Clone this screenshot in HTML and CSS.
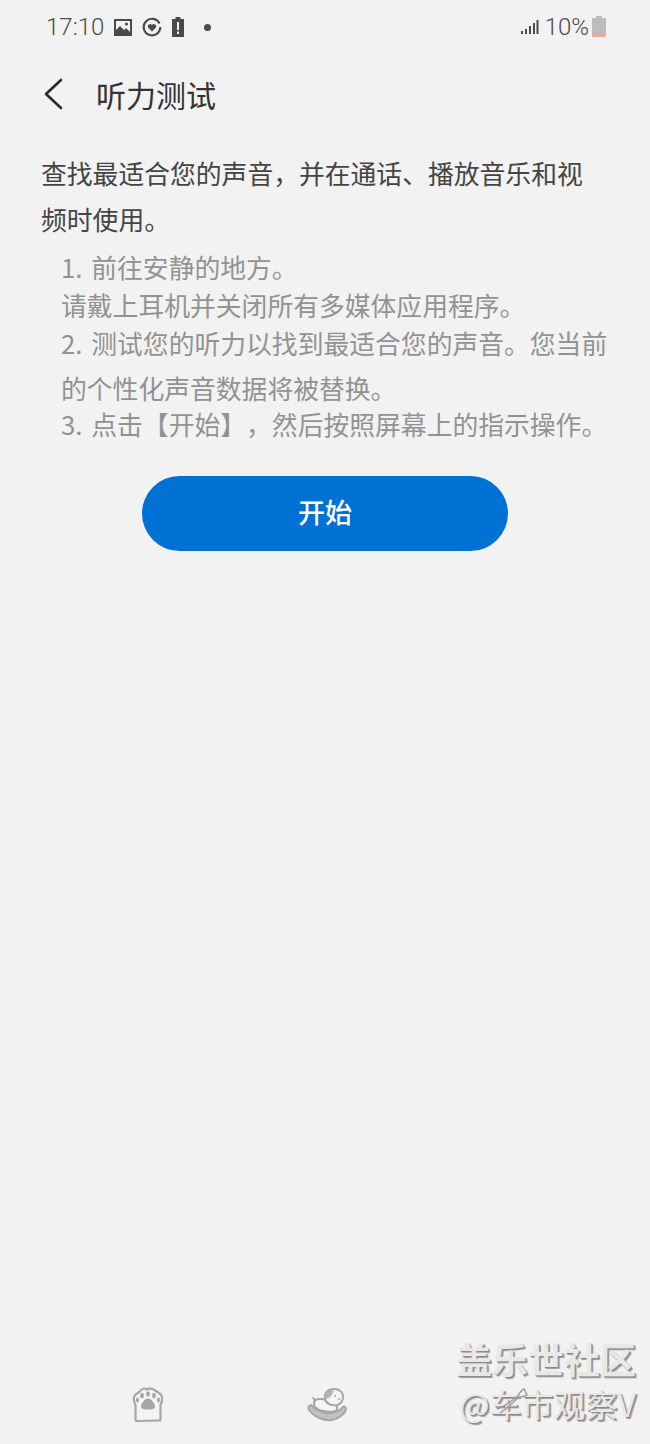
FILE: index.html
```html
<!DOCTYPE html>
<html lang="zh-CN">
<head>
  <meta charset="utf-8">
  <title>听力测试</title>
  <link rel="stylesheet" href="styles.css">
</head>
<body>
  <div class="screen">
    <!-- Status bar -->
    <div class="status">
      <div class="status-left">
        <span class="time">17:10</span>
        <svg class="ico" width="20" height="19" viewBox="0 0 20 19">
          <path fill="#4a4a4a" fill-rule="evenodd" d="M1 1h18v17H1z M3 3v9l4-4 4 4 2-2 4 4V3z"/>
          <circle cx="13.500" cy="6" r="1.600" fill="#4a4a4a"/>
        </svg>
        <svg class="ico" width="20" height="20" viewBox="0 0 20 20">
          <path fill="none" stroke="#4a4a4a" stroke-width="2.200" d="M17.500 6.500A8.300 8.300 0 1 0 18.300 10"/>
          <path fill="#4a4a4a" d="M10 14.500l-4-4a2.400 2.400 0 0 1 4-2.600 2.400 2.400 0 0 1 4 2.600z"/>
        </svg>
        <svg class="ico" width="14" height="20" viewBox="0 0 14 20">
          <path fill="#4a4a4a" fill-rule="evenodd" d="M4.500 0h5v2H13v18H1V2h3.500z M6 5v8h2V5z M6 14.500v2.500h2v-2.500z"/>
        </svg>
        <span class="dot"></span>
      </div>
      <div class="status-right">
        <svg class="ico" width="18" height="16" viewBox="0 0 18 16">
          <path fill="#4a4a4a" d="M0 12h2v3H0z M4 10h2v5H4z M8 7h2v8H8z M12 4h2v11h-2z M15.500 1h2v14h-2z"/>
        </svg>
        <span class="percent">10%</span>
        <svg class="ico" width="14" height="22" viewBox="0 0 14 22">
          <path fill="#bdbdbd" d="M4 0h6v2h4v15H0V2h4z"/>
          <path fill="#f0a898" d="M0 17h14v3a1 1 0 0 1-1 1H1a1 1 0 0 1-1-1z"/>
        </svg>
      </div>
    </div>

    <!-- Title row -->
    <div class="header">
      <svg class="back" width="20" height="32" viewBox="0 0 20 32">
        <path fill="none" stroke="#2b2b2b" stroke-width="2.600" stroke-linecap="round" stroke-linejoin="round" d="M18 2L3 16l15 14"/>
      </svg>
      <h1>听力测试</h1>
    </div>

    <div class="content">
      <p class="intro">查找最适合您的声音，并在通话、播放音乐和视频时使用。</p>
      <div class="steps">
        <p>1. 前往安静的地方。<br>请戴上耳机并关闭所有多媒体应用程序。</p>
        <p class="step-wide">2. 测试您的听力以找到最适合您的声音。您当前的个性化声音数据将被替换。</p>
        <p>3. 点击【开始】，然后按照屏幕上的指示操作。</p>
      </div>
      <button class="start">开始</button>
    </div>

    <!-- Bottom stickers -->
    <div class="bottom">
      <svg width="32" height="36" viewBox="0 0 32 36">
        <path fill="#f4f4f4" stroke="#a6a6a6" stroke-width="2.200" stroke-linejoin="round" d="M5 34c-1 0-1.500-.6-1.500-1.500V18C2 15 1 12 2.500 9 4 6 7 6 8 4c2-2.500 5-3 7-1.500 2-1.500 6-1 8 1 2 1.500 5 2.500 6.500 5 1.500 3 .5 6-1 9v14.500c0 1-.5 1.500-1.500 1.500z"/>
        <ellipse cx="10" cy="8.500" rx="1.900" ry="2.700" fill="#a6a6a6"/>
        <ellipse cx="16" cy="7" rx="1.900" ry="2.700" fill="#a6a6a6"/>
        <ellipse cx="22" cy="8.500" rx="1.900" ry="2.700" fill="#a6a6a6"/>
        <ellipse cx="5.500" cy="13" rx="1.500" ry="2.600" fill="#a6a6a6"/>
        <ellipse cx="26.500" cy="13" rx="1.500" ry="2.600" fill="#a6a6a6"/>
        <path fill="#a6a6a6" d="M16 11.500c3 0 7 5 7 8 0 2.500-3 3-7 3s-7-.5-7-3c0-3 4-8 7-8z"/>
      </svg>
      <svg width="40" height="34" viewBox="0 0 40 34">
        <path fill="#c2c2c2" stroke="#a6a6a6" stroke-width="2" stroke-linejoin="round" d="M4 17c-3 1-3 3-2 5 5 7 15 11 23 10 6-1 13-6 14-11 0-2-2-3-3-2-3 4-10 7-17 6-6-1-11-4-15-8z"/>
        <path fill="#f4f4f4" stroke="#a6a6a6" stroke-width="2" d="M8 13c-3 4 1 9 8 10 6 1 13 1 14-2 1-2-1-4-3-7l-12-3c-3 0-6-1-7 2z"/>
        <path fill="#a6a6a6" d="M5 9c1 2 1 4 3 6l1-3c-1-1-2-3-4-3z"/>
        <path fill="#f4f4f4" stroke="#a6a6a6" stroke-width="2" d="M18 11c-1-6 3-10 9-10 5 0 9 3 9 7 .5 4-2 8-6 9-5 1-11-1-12-6z"/>
        <path fill="#b4b4b4" d="M18 10c0-5 4-8 8-8 1 2-1 5-3 7-2 2-4 2-5 1z"/>
        <circle cx="28" cy="8" r="1" fill="#a6a6a6"/>
        <circle cx="32" cy="11" r="1" fill="#a6a6a6"/>
      </svg>
    </div>

    <!-- Watermark over the corner -->
    <div class="watermark">
      <div class="wm-top">盖乐世社区</div>
      <div class="wm-bottom">@车市观察V</div>
    </div>
    <svg class="scribble" width="34" height="30" viewBox="0 0 34 30">
      <path fill="none" stroke="#9a9a9a" stroke-width="1.400" d="M2 22c8-2 14-8 20-12 2-3 4-7 7-8 2 2 1 4 3 6-3 2-6 1-9 3-6 5-10 10-18 15"/>
    </svg>
  </div>
</body>
</html>
```

FILE: styles.css
```css
html, body {
  margin: 0;
  padding: 0;
}
body {
  background-color: #f2f2f2;
  font-family: "Noto Sans CJK SC", "Noto Sans", sans-serif;
}
p {
  margin: 0;
}
.screen {
  position: relative;
  width: 650px;
  height: 1444px;
  display: flex;
  flex-direction: column;
  overflow: hidden;
}
.status {
  height: 54px;
  padding: 0 44px 0 46px;
  display: flex;
  justify-content: space-between;
  align-items: center;
  color: #4a4a4a;
}
.status-left, .status-right {
  display: flex;
  align-items: center;
}
.time, .percent {
  font-family: Roboto, sans-serif;
  font-size: 24px;
  font-weight: 300;
}
.time {
  margin-right: 9px;
}
.status-left .ico {
  margin-right: 9px;
}
.dot {
  width: 7px;
  height: 7px;
  margin-left: 10px;
  border-radius: 50%;
  background-color: #4a4a4a;
}
.percent {
  margin: 0 3px 0 6px;
}
.header {
  height: 80px;
  padding-left: 43px;
  display: flex;
  align-items: center;
}
.back {
  margin-right: 33px;
}
h1 {
  margin: 0;
  font-size: 30px;
  font-weight: 400;
  color: #333;
}
.content {
  padding: 16px 41px 0;
  display: flex;
  flex-direction: column;
}
.intro {
  max-width: 555px;
  font-size: 25.800px;
  line-height: 46px;
  color: #444;
  text-spacing-trim: space-all;
}
.steps {
  margin-top: 6px;
  padding-left: 20px;
  margin-right: -4px;
  font-size: 25.800px;
  line-height: 37.500px;
  word-spacing: 3px;
  color: #929292;
  text-spacing-trim: space-all;
}
.step-wide {
  margin: -3px 0 -5px;
  line-height: 45px;
}
.start {
  width: 366px;
  height: 75px;
  margin: 33px auto 0;
  padding: 0 0 4px;
  border: none;
  border-radius: 38px;
  background-color: #0072d6;
  color: #fff;
  font-family: inherit;
  font-size: 27px;
  font-weight: 500;
}
.bottom {
  position: absolute;
  left: 132px;
  top: 1387px;
  width: 215px;
  display: flex;
  justify-content: space-between;
  align-items: center;
}
.watermark {
  position: absolute;
  right: 14px;
  top: 1336px;
  text-align: right;
  color: #e8e8e8;
  text-shadow: 1px 1px 0 #8a8a8a, 2px 2px 1px #9a9a9a;
}
.wm-top {
  font-size: 36px;
  font-weight: 700;
  line-height: 44px;
}
.wm-bottom {
  margin-top: 4px;
  font-size: 32px;
  line-height: 38px;
}
.scribble {
  position: absolute;
  left: 495px;
  top: 1387px;
}
```
